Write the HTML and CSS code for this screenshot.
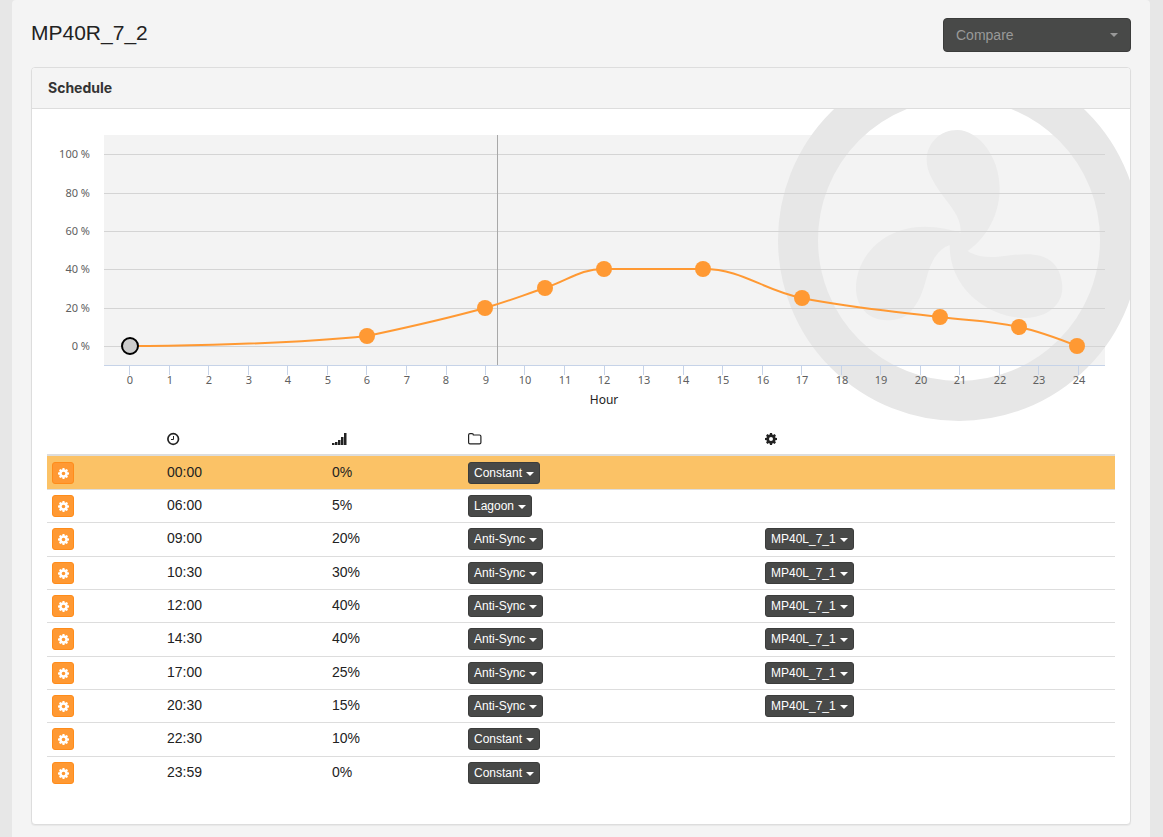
FILE: index.html
```html
<!DOCTYPE html>
<html lang="en">
<head>
<meta charset="utf-8">
<title>MP40R_7_2</title>
<link rel="stylesheet" href="styles.css">
</head>
<body>
<svg class="sprite" aria-hidden="true">
  <symbol id="gear" viewBox="0 0 12 12">
    <path fill-rule="evenodd" d="M5 0h2l.35 1.6.75.3L9.5 1.1l1.4 1.4-.8 1.4.3.75L12 5v2l-1.6.35-.3.75.8 1.4-1.4 1.4-1.4-.8-.75.3L7 12H5l-.35-1.6-.75-.3-1.4.8-1.4-1.4.8-1.4-.3-.75L0 7V5l1.6-.35.3-.75-.8-1.4 1.4-1.4 1.4.8.75-.3zM6 4a2 2 0 1 0 0 4 2 2 0 0 0 0-4z"/>
  </symbol>
</svg>
<main class="page">
  <header class="page-header">
    <h1 class="page-title">MP40R_7_2</h1>
    <div class="compare">
      <select class="compare-select" aria-label="Compare"><option>Compare</option></select>
    </div>
  </header>
  <section class="panel">
    <h2 class="panel-heading">Schedule</h2>
    <div class="panel-body">
      <svg class="chart" viewBox="0 0 1068 300" role="img" aria-label="Schedule by hour">
        <rect class="plot" x="57" y="11" width="1001" height="230"/>
        <circle class="ring" cx="912" cy="116" r="161"/>
        <path class="blades" transform="translate(693 -24) scale(.3333)" d="M662 398C664 350 635 325 600 275C580 245 560 215 560 180C560 130 600 90 652 90C715 90 779 170 779 265C779 360 725 425 683 453C710 470 740 475 800 467C850 462 905 455 940 490C960 510 967 540 967 565C967 615 920 654 855 654C750 654 628 570 629 435C600 445 580 470 565 515C550 565 545 600 505 642C490 655 465 661 440 661C385 661 348 620 348 565C348 470 430 380 555 380C595 380 640 390 662 398Z"/>
        <path class="grid" d="M57 30.5H1058M57 69.5H1058M57 107.5H1058M57 145.5H1058M57 184.5H1058M57 222.5H1058"/>
        <path class="axis" d="M57 241.5H1058M82.5 241v10M122.5 241v10M161.5 241v10M201.5 241v10M240.500 241v10M280.500 241v10M319.500 241v10M359.500 241v10M399.500 241v10M438.500 241v10M477.500 241v10M517.500 241v10M557.500 241v10M596.500 241v10M636.500 241v10M675.500 241v10M715.500 241v10M754.500 241v10M794.500 241v10M833.500 241v10M873.500 241v10M912.500 241v10M952.500 241v10M991.500 241v10M1031.500 241v10"/>
        <path class="now" d="M450.500 11V241"/>
        <g class="labels labels-y">
          <text x="43" y="34">100 %</text><text x="43" y="73">80 %</text><text x="43" y="111">60 %</text><text x="43" y="149">40 %</text><text x="43" y="188">20 %</text><text x="43" y="226">0 %</text>
        </g>
        <g class="labels labels-x">
          <text x="83" y="260">0</text><text x="123" y="260">1</text><text x="162" y="260">2</text><text x="202" y="260">3</text><text x="241" y="260">4</text><text x="281" y="260">5</text><text x="320" y="260">6</text><text x="360" y="260">7</text><text x="399" y="260">8</text><text x="439" y="260">9</text><text x="478" y="260">10</text><text x="518" y="260">11</text><text x="557" y="260">12</text><text x="597" y="260">13</text><text x="636" y="260">14</text><text x="676" y="260">15</text><text x="716" y="260">16</text><text x="755" y="260">17</text><text x="795" y="260">18</text><text x="834" y="260">19</text><text x="874" y="260">20</text><text x="913" y="260">21</text><text x="953" y="260">22</text><text x="992" y="260">23</text><text x="1032" y="260">24</text>
          <text class="axis-title" x="557" y="280">Hour</text>
        </g>
        <path class="line" d="M83 222C83 222 225 222 320 212C367 202 391 197 438 184C462 177 474 172 498 164C522 156 533 145 557 145C597 145 616 145 656 145C696 145 715 166 755 174C810 185 838 186 893 193C925 197 940 196 972 203C995 208 1030 222 1030 222"/>
        <g class="dots">
          <circle cx="320" cy="212" r="8"/><circle cx="438" cy="184" r="8"/><circle cx="498" cy="164" r="8"/><circle cx="557" cy="145" r="8"/><circle cx="656" cy="145" r="8"/><circle cx="755" cy="174" r="8"/><circle cx="893" cy="193" r="8"/><circle cx="972" cy="203" r="8"/><circle cx="1030" cy="222" r="8"/>
        </g>
        <circle class="dot-selected" cx="83" cy="222" r="8"/>
      </svg>
      <table class="schedule">
        <colgroup><col class="col-action"><col class="col-time"><col class="col-level"><col class="col-mode"><col></colgroup>
        <thead>
          <tr>
            <th></th>
            <th aria-label="Time"><svg class="icon" viewBox="0 0 14 14"><circle cx="6.200" cy="7" r="5.300" fill="none" stroke="currentColor" stroke-width="1.700"/><path d="M6.500 4v3.500H4" fill="none" stroke="currentColor"/></svg></th>
            <th aria-label="Intensity"><svg class="icon" viewBox="0 0 14 14"><path d="M0 11h2.500v2H0zM3 10h2.500v3H3zM6 8h2.500v5H6zM9 5h2.500v8H9zM12 1h2.500v12H12z"/></svg></th>
            <th aria-label="Mode"><svg class="icon" viewBox="0 0 14 14"><path d="M.6 3Q.6 1.600 2 1.600H4Q5.400 1.600 5.400 3H11.500Q12.900 3 12.900 4.400V10.500Q12.900 11.900 11.500 11.900H2Q.6 11.900.6 10.500Z" fill="none" stroke="currentColor" stroke-width="1.200"/></svg></th>
            <th aria-label="Linked pump"><svg class="icon icon-gear"><use href="#gear"/></svg></th>
          </tr>
        </thead>
        <tbody>
          <tr class="active"><td><button class="btn btn-edit" aria-label="Edit"><svg><use href="#gear"/></svg></button></td><td>00:00</td><td>0%</td><td><button class="btn btn-menu">Constant</button></td><td></td></tr>
          <tr><td><button class="btn btn-edit" aria-label="Edit"><svg><use href="#gear"/></svg></button></td><td>06:00</td><td>5%</td><td><button class="btn btn-menu">Lagoon</button></td><td></td></tr>
          <tr><td><button class="btn btn-edit" aria-label="Edit"><svg><use href="#gear"/></svg></button></td><td>09:00</td><td>20%</td><td><button class="btn btn-menu">Anti-Sync</button></td><td><button class="btn btn-menu">MP40L_7_1</button></td></tr>
          <tr><td><button class="btn btn-edit" aria-label="Edit"><svg><use href="#gear"/></svg></button></td><td>10:30</td><td>30%</td><td><button class="btn btn-menu">Anti-Sync</button></td><td><button class="btn btn-menu">MP40L_7_1</button></td></tr>
          <tr><td><button class="btn btn-edit" aria-label="Edit"><svg><use href="#gear"/></svg></button></td><td>12:00</td><td>40%</td><td><button class="btn btn-menu">Anti-Sync</button></td><td><button class="btn btn-menu">MP40L_7_1</button></td></tr>
          <tr><td><button class="btn btn-edit" aria-label="Edit"><svg><use href="#gear"/></svg></button></td><td>14:30</td><td>40%</td><td><button class="btn btn-menu">Anti-Sync</button></td><td><button class="btn btn-menu">MP40L_7_1</button></td></tr>
          <tr><td><button class="btn btn-edit" aria-label="Edit"><svg><use href="#gear"/></svg></button></td><td>17:00</td><td>25%</td><td><button class="btn btn-menu">Anti-Sync</button></td><td><button class="btn btn-menu">MP40L_7_1</button></td></tr>
          <tr><td><button class="btn btn-edit" aria-label="Edit"><svg><use href="#gear"/></svg></button></td><td>20:30</td><td>15%</td><td><button class="btn btn-menu">Anti-Sync</button></td><td><button class="btn btn-menu">MP40L_7_1</button></td></tr>
          <tr><td><button class="btn btn-edit" aria-label="Edit"><svg><use href="#gear"/></svg></button></td><td>22:30</td><td>10%</td><td><button class="btn btn-menu">Constant</button></td><td></td></tr>
          <tr><td><button class="btn btn-edit" aria-label="Edit"><svg><use href="#gear"/></svg></button></td><td>23:59</td><td>0%</td><td><button class="btn btn-menu">Constant</button></td><td></td></tr>
        </tbody>
      </table>
    </div>
  </section>
</main>
</body>
</html>
```

FILE: styles.css
```css
* { box-sizing: border-box; }
body {
  margin: 0;
  background: #e7e7e7;
  color: #222;
  font: 14px/20px "Liberation Sans", Arial, sans-serif;
}
.sprite { position: absolute; width: 0; height: 0; }
.page {
  margin: 0 13px 0 12px;
  padding: 18px 19px 12px;
  min-height: 100vh;
  background: #f4f4f4;
  border-radius: 4px 4px 0 0;
}
.page-header {
  display: flex;
  justify-content: space-between;
  align-items: flex-start;
  margin-bottom: 15px;
}
.page-title {
  margin: 0;
  font-size: 21px;
  line-height: 30px;
  font-weight: 400;
}
.compare { position: relative; width: 188px; }
.compare::after {
  content: "";
  position: absolute;
  top: 15px;
  right: 13px;
  border: 4px solid transparent;
  border-top-color: #999;
  border-bottom: 0;
  pointer-events: none;
}
.compare-select {
  display: block;
  width: 100%;
  height: 34px;
  padding: 0 12px;
  appearance: none;
  border: 1px solid #3b3c3b;
  border-radius: 4px;
  background: #484948;
  color: #999;
  font: inherit;
}
.panel {
  background: #fff;
  border: 1px solid #ddd;
  border-radius: 4px;
  box-shadow: 0 1px 1px rgba(0, 0, 0, .05);
  overflow: hidden;
}
.panel-heading {
  margin: 0;
  padding: 10px 16px;
  background: #f4f4f4;
  border-bottom: 1px solid #ddd;
  color: #333;
  font: 700 14px/20px Inter, "Liberation Sans", sans-serif;
}
.panel-body { padding: 15px 15px 35px; overflow: hidden; }

.chart { display: block; width: 100%; overflow: visible; }
.plot { fill: #f3f3f3; }
.ring { fill: none; stroke: #e7e7e7; stroke-width: 40; }
.blades { fill: #ebebeb; }
.grid, .axis, .now, .line { fill: none; }
.grid { stroke: #d4d4d4; }
.axis { stroke: #c6d3e8; }
.now { stroke: #a8a8a8; }
.line { stroke: #ff9933; stroke-width: 2; }
.dots { fill: #ff9933; }
.dot-selected { fill: #ccc; stroke: #000; stroke-width: 2; }
.labels { fill: #606060; font: 11px "Noto Sans", sans-serif; }
.labels-y { text-anchor: end; }
.labels-x { text-anchor: middle; }
.axis-title { fill: #222; font-size: 12px; }

.schedule {
  width: 100%;
  table-layout: fixed;
  border-collapse: separate;
  border-spacing: 0;
}
.col-action { width: 115px; }
.col-time { width: 165px; }
.col-level { width: 136px; }
.col-mode { width: 297px; }
.schedule th {
  height: 32px;
  padding: 5px;
  border-bottom: 2px solid #ddd;
  text-align: left;
}
.schedule td {
  height: 33px;
  padding: 5px 5px 4px;
  border-top: 1px solid #ddd;
  vertical-align: top;
}
.schedule tr:nth-child(3n) td { height: 34px; }
.schedule .active td { background: #fbc266; border-top-color: #fbc266; }
.icon { display: block; width: 14px; height: 14px; fill: currentColor; overflow: visible; }
.icon-gear { width: 12px; height: 12px; }
.btn {
  display: flex;
  align-items: center;
  justify-content: center;
  height: 22px;
  padding: 0 5px;
  border: 1px solid;
  border-radius: 3px;
  color: #fff;
  font: 12px/18px "Liberation Sans", Arial, sans-serif;
  cursor: pointer;
}
.btn-edit { width: 22px; padding: 0; background: #ff9933; border-color: #ff8c1a; }
.btn-edit svg { flex: none; width: 11px; height: 11px; fill: #fff; }
.btn-menu { gap: 4px; background: #484948; border-color: #3b3c3b; }
.btn-menu::after {
  content: "";
  margin-top: 2px;
  border: 4px solid transparent;
  border-top-color: #fff;
  border-bottom: 0;
}
```
